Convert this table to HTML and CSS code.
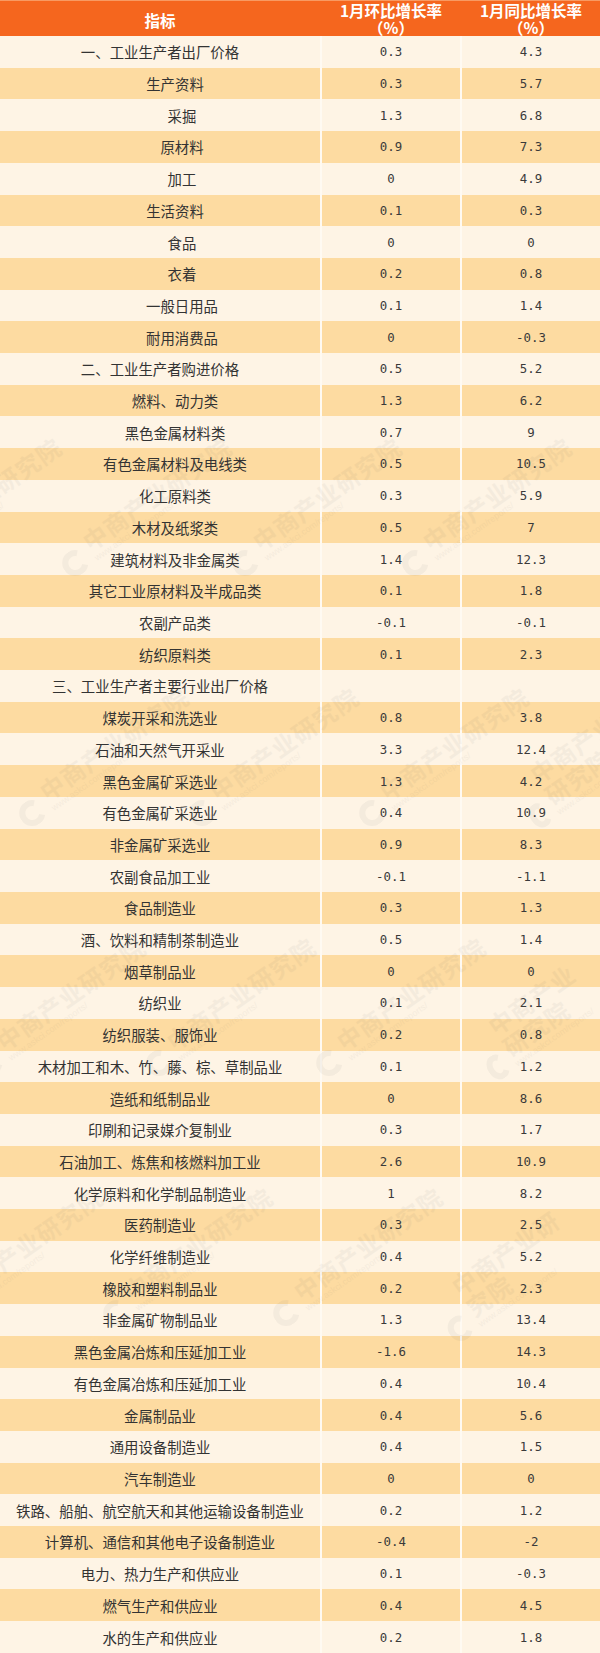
FILE: index.html
```html
<!DOCTYPE html>
<html lang="zh-CN">
<head>
<meta charset="utf-8">
<title>1月工业生产者价格</title>
<link rel="stylesheet" href="styles.css">
</head>
<body>
<div class="sheet">
  <div class="head">
    <div class="hc one">指标</div>
    <div class="hc two">1月环比增长率<br>（%）</div>
    <div class="hc two">1月同比增长率<br>（%）</div>
  </div>
  <div class="row"><div class="name">一、工业生产者出厂价格</div><div class="num">0.3</div><div class="num">4.3</div></div>
  <div class="row"><div class="name l1">生产资料</div><div class="num">0.3</div><div class="num">5.7</div></div>
  <div class="row"><div class="name l2">采掘</div><div class="num">1.3</div><div class="num">6.8</div></div>
  <div class="row"><div class="name l2">原材料</div><div class="num">0.9</div><div class="num">7.3</div></div>
  <div class="row"><div class="name l2">加工</div><div class="num">0</div><div class="num">4.9</div></div>
  <div class="row"><div class="name l1">生活资料</div><div class="num">0.1</div><div class="num">0.3</div></div>
  <div class="row"><div class="name l2">食品</div><div class="num">0</div><div class="num">0</div></div>
  <div class="row"><div class="name l2">衣着</div><div class="num">0.2</div><div class="num">0.8</div></div>
  <div class="row"><div class="name l2">一般日用品</div><div class="num">0.1</div><div class="num">1.4</div></div>
  <div class="row"><div class="name l2">耐用消费品</div><div class="num">0</div><div class="num">-0.3</div></div>
  <div class="row"><div class="name">二、工业生产者购进价格</div><div class="num">0.5</div><div class="num">5.2</div></div>
  <div class="row"><div class="name l1">燃料、动力类</div><div class="num">1.3</div><div class="num">6.2</div></div>
  <div class="row"><div class="name l1">黑色金属材料类</div><div class="num">0.7</div><div class="num">9</div></div>
  <div class="row"><div class="name l1">有色金属材料及电线类</div><div class="num">0.5</div><div class="num">10.5</div></div>
  <div class="row"><div class="name l1">化工原料类</div><div class="num">0.3</div><div class="num">5.9</div></div>
  <div class="row"><div class="name l1">木材及纸浆类</div><div class="num">0.5</div><div class="num">7</div></div>
  <div class="row"><div class="name l1">建筑材料及非金属类</div><div class="num">1.4</div><div class="num">12.3</div></div>
  <div class="row"><div class="name l1">其它工业原材料及半成品类</div><div class="num">0.1</div><div class="num">1.8</div></div>
  <div class="row"><div class="name l1">农副产品类</div><div class="num">-0.1</div><div class="num">-0.1</div></div>
  <div class="row"><div class="name l1">纺织原料类</div><div class="num">0.1</div><div class="num">2.3</div></div>
  <div class="row"><div class="name">三、工业生产者主要行业出厂价格</div><div class="num"></div><div class="num"></div></div>
  <div class="row"><div class="name">煤炭开采和洗选业</div><div class="num">0.8</div><div class="num">3.8</div></div>
  <div class="row"><div class="name">石油和天然气开采业</div><div class="num">3.3</div><div class="num">12.4</div></div>
  <div class="row"><div class="name">黑色金属矿采选业</div><div class="num">1.3</div><div class="num">4.2</div></div>
  <div class="row"><div class="name">有色金属矿采选业</div><div class="num">0.4</div><div class="num">10.9</div></div>
  <div class="row"><div class="name">非金属矿采选业</div><div class="num">0.9</div><div class="num">8.3</div></div>
  <div class="row"><div class="name">农副食品加工业</div><div class="num">-0.1</div><div class="num">-1.1</div></div>
  <div class="row"><div class="name">食品制造业</div><div class="num">0.3</div><div class="num">1.3</div></div>
  <div class="row"><div class="name">酒、饮料和精制茶制造业</div><div class="num">0.5</div><div class="num">1.4</div></div>
  <div class="row"><div class="name">烟草制品业</div><div class="num">0</div><div class="num">0</div></div>
  <div class="row"><div class="name">纺织业</div><div class="num">0.1</div><div class="num">2.1</div></div>
  <div class="row"><div class="name">纺织服装、服饰业</div><div class="num">0.2</div><div class="num">0.8</div></div>
  <div class="row"><div class="name">木材加工和木、竹、藤、棕、草制品业</div><div class="num">0.1</div><div class="num">1.2</div></div>
  <div class="row"><div class="name">造纸和纸制品业</div><div class="num">0</div><div class="num">8.6</div></div>
  <div class="row"><div class="name">印刷和记录媒介复制业</div><div class="num">0.3</div><div class="num">1.7</div></div>
  <div class="row"><div class="name">石油加工、炼焦和核燃料加工业</div><div class="num">2.6</div><div class="num">10.9</div></div>
  <div class="row"><div class="name">化学原料和化学制品制造业</div><div class="num">1</div><div class="num">8.2</div></div>
  <div class="row"><div class="name">医药制造业</div><div class="num">0.3</div><div class="num">2.5</div></div>
  <div class="row"><div class="name">化学纤维制造业</div><div class="num">0.4</div><div class="num">5.2</div></div>
  <div class="row"><div class="name">橡胶和塑料制品业</div><div class="num">0.2</div><div class="num">2.3</div></div>
  <div class="row"><div class="name">非金属矿物制品业</div><div class="num">1.3</div><div class="num">13.4</div></div>
  <div class="row"><div class="name">黑色金属冶炼和压延加工业</div><div class="num">-1.6</div><div class="num">14.3</div></div>
  <div class="row"><div class="name">有色金属冶炼和压延加工业</div><div class="num">0.4</div><div class="num">10.4</div></div>
  <div class="row"><div class="name">金属制品业</div><div class="num">0.4</div><div class="num">5.6</div></div>
  <div class="row"><div class="name">通用设备制造业</div><div class="num">0.4</div><div class="num">1.5</div></div>
  <div class="row"><div class="name">汽车制造业</div><div class="num">0</div><div class="num">0</div></div>
  <div class="row"><div class="name">铁路、船舶、航空航天和其他运输设备制造业</div><div class="num">0.2</div><div class="num">1.2</div></div>
  <div class="row"><div class="name">计算机、通信和其他电子设备制造业</div><div class="num">-0.4</div><div class="num">-2</div></div>
  <div class="row"><div class="name">电力、热力生产和供应业</div><div class="num">0.1</div><div class="num">-0.3</div></div>
  <div class="row"><div class="name">燃气生产和供应业</div><div class="num">0.4</div><div class="num">4.5</div></div>
  <div class="row"><div class="name">水的生产和供应业</div><div class="num">0.2</div><div class="num">1.8</div></div>

  <div class="wm">
    <div class="mark a1"><span class="logo"></span><span class="wt">中商产业研究院<small>www.askci.com/reports/</small></span></div>
    <div class="mark a2"><span class="logo"></span><span class="wt">中商产业研究院<small>www.askci.com/reports/</small></span></div>
    <div class="mark a3"><span class="logo"></span><span class="wt">中商产业研究院<small>www.askci.com/reports/</small></span></div>
    <div class="mark a4"><span class="logo"></span><span class="wt">中商产业研究院<small>www.askci.com/reports/</small></span></div>
    <div class="mark b1"><span class="logo"></span><span class="wt">中商产业研究院<small>www.askci.com/reports/</small></span></div>
    <div class="mark b2"><span class="logo"></span><span class="wt">中商产业研究院<small>www.askci.com/reports/</small></span></div>
    <div class="mark b3"><span class="logo"></span><span class="wt">中商产业研究院<small>www.askci.com/reports/</small></span></div>
    <div class="mark b4"><span class="logo"></span><span class="wt">中商产业研究院<small>www.askci.com/reports/</small></span></div>
    <div class="mark c1"><span class="logo"></span><span class="wt">中商产业研究院<small>www.askci.com/reports/</small></span></div>
    <div class="mark c2"><span class="logo"></span><span class="wt">中商产业研究院<small>www.askci.com/reports/</small></span></div>
    <div class="mark c3"><span class="logo"></span><span class="wt">中商产业研究院<small>www.askci.com/reports/</small></span></div>
    <div class="mark c4"><span class="logo"></span><span class="wt">中商产业研究院<small>www.askci.com/reports/</small></span></div>
    <div class="mark d1"><span class="logo"></span><span class="wt">中商产业研究院<small>www.askci.com/reports/</small></span></div>
    <div class="mark d2"><span class="logo"></span><span class="wt">中商产业研究院<small>www.askci.com/reports/</small></span></div>
    <div class="mark d3"><span class="logo"></span><span class="wt">中商产业研究院<small>www.askci.com/reports/</small></span></div>
    <div class="mark d4"><span class="logo"></span><span class="wt">中商产业研究院<small>www.askci.com/reports/</small></span></div>
  </div>
</div>
</body>
</html>
```

FILE: styles.css
```css
html, body {
  margin: 0;
  padding: 0;
  background: #fef4e5;
}

.sheet {
  position: relative;
  width: 600px;
  height: 1653px;
  display: flex;
  flex-direction: column;
  overflow: hidden;
  font-family: "Noto Sans CJK SC", "Noto Sans", sans-serif;
  color: #333;
}

.head {
  height: 36px;
  flex: none;
  display: grid;
  grid-template-columns: 320px 138px 138px;
  column-gap: 2px;
  background: #f5661e;
  border-top: 1px solid #f89a62;
  box-sizing: border-box;
  color: #fff;
  font-weight: bold;
  font-size: 15.5px;
}

.hc {
  display: flex;
  justify-content: center;
  text-align: center;
}

.hc.one {
  align-items: center;
  padding-top: 3px;
  line-height: 20px;
}

.hc.two {
  align-items: flex-start;
  padding-top: 1px;
  line-height: 16.5px;
}

.row {
  flex: 1 1 0;
  min-height: 0;
  display: grid;
  grid-template-columns: 320px 138px 138px;
  column-gap: 2px;
  background: #fffaf2;
}

.row > div {
  display: flex;
  align-items: center;
  justify-content: center;
  background: #fef4e5;
}

.row:nth-of-type(odd) > div {
  background: #fddba1;
}

.name {
  font-size: 14.4px;
  white-space: nowrap;
}

.name.l1 {
  padding-left: 30px;
}

.name.l2 {
  padding-left: 44px;
}

.num {
  font-family: "DejaVu Sans Mono", "Liberation Mono", monospace;
  font-size: 12.4px;
  color: #3a3a3a;
}

/* watermark overlay */
.wm {
  position: absolute;
  inset: 0;
  pointer-events: none;
}

.mark {
  position: absolute;
  display: flex;
  align-items: flex-end;
  gap: 6px;
  transform: rotate(-35deg);
  transform-origin: center;
  opacity: 0.05;
  color: #555;
}

.logo {
  width: 26px;
  height: 26px;
  border-radius: 50%;
  border: 6px solid #555;
  border-right-color: transparent;
  box-sizing: border-box;
}

.wt {
  display: flex;
  flex-direction: column;
  font-size: 24px;
  font-weight: bold;
  line-height: 26px;
  letter-spacing: 1px;
}

.wt small {
  font-size: 9px;
  line-height: 10px;
  font-weight: normal;
  letter-spacing: 0;
  font-family: "Liberation Sans", sans-serif;
}

.a1 { left: -127px; top: 489px; }
.a2 { left: 43px; top: 489px; }
.a3 { left: 213px; top: 489px; }
.a4 { left: 383px; top: 489px; }
.b1 { left: 0px; top: 739px; }
.b2 { left: 170px; top: 739px; }
.b3 { left: 340px; top: 739px; }
.b4 { left: 510px; top: 739px; }
.c1 { left: -43px; top: 989px; }
.c2 { left: 127px; top: 989px; }
.c3 { left: 297px; top: 989px; }
.c4 { left: 467px; top: 989px; }
.d1 { left: -86px; top: 1239px; }
.d2 { left: 84px; top: 1239px; }
.d3 { left: 254px; top: 1239px; }
.d4 { left: 424px; top: 1239px; }
```
